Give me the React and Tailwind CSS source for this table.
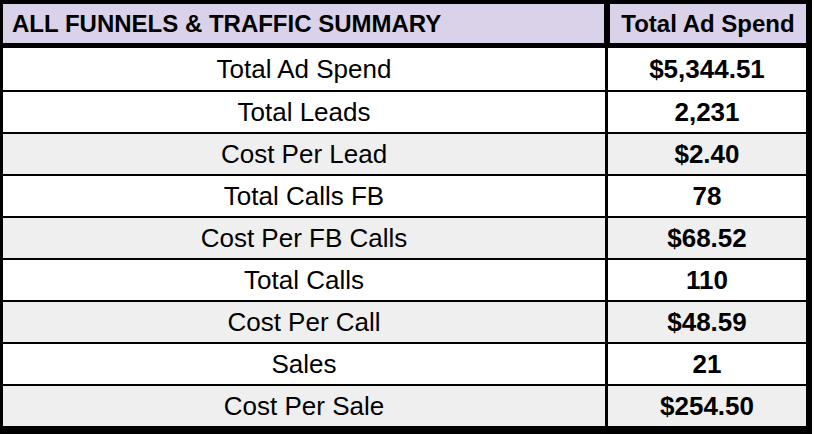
import React from "react";

const rows = [
  { label: "Total Ad Spend", value: "$5,344.51", shaded: false },
  { label: "Total Leads", value: "2,231", shaded: false },
  { label: "Cost Per Lead", value: "$2.40", shaded: true },
  { label: "Total Calls FB", value: "78", shaded: false },
  { label: "Cost Per FB Calls", value: "$68.52", shaded: true },
  { label: "Total Calls", value: "110", shaded: false },
  { label: "Cost Per Call", value: "$48.59", shaded: true },
  { label: "Sales", value: "21", shaded: false },
  { label: "Cost Per Sale", value: "$254.50", shaded: true },
];

export default function App() {
  return (
    <div className="w-[814px] h-[434px] bg-white font-['Liberation_Sans',Arial,sans-serif] text-black">
      <div className="w-[812px] border-black border-t-4 border-l-[3px] border-r-[6px] border-b-[8px]">
        {/* Header */}
        <div className="flex h-[44px] bg-[#d9d2e9] border-b-[5px] border-black">
          <div className="w-[601px] flex items-center pl-[9px] text-[24px] font-bold leading-none">
            ALL FUNNELS &amp; TRAFFIC SUMMARY
          </div>
          <div className="flex-1 flex items-center justify-center border-l-[6px] border-black text-[24px] font-bold leading-none">
            Total Ad Spend
          </div>
        </div>

        {/* Body */}
        {rows.map((row, i) => (
          <div
            key={row.label}
            className={`flex h-[42px] ${i > 0 ? "border-t-2 border-black" : ""} ${
              row.shaded ? "bg-[#efefef]" : "bg-white"
            }`}
          >
            <div className="w-[602px] flex items-center justify-center text-[26px] leading-none">
              {row.label}
            </div>
            <div className="flex-1 flex items-center justify-center border-l-[3px] border-black text-[26px] font-bold leading-none">
              {row.value}
            </div>
          </div>
        ))}
      </div>
    </div>
  );
}
